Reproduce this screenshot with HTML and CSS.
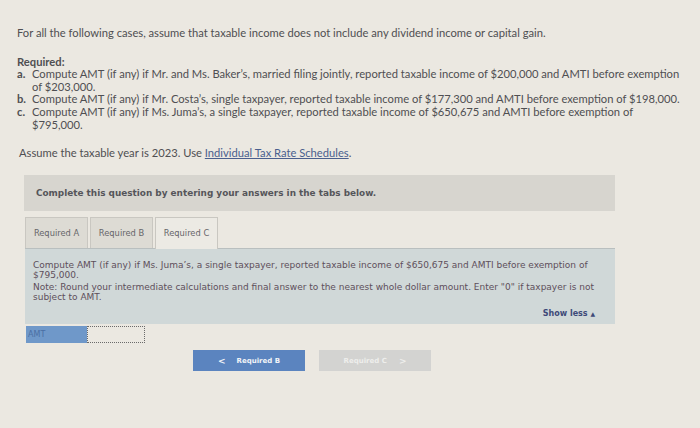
FILE: index.html
```html
<!DOCTYPE html>
<html>
<head>
<meta charset="utf-8">
<link rel="stylesheet" href="styles.css">
</head>
<body>
<div class="page">
  <p class="intro">For all the following cases, assume that taxable income does not include any dividend income or capital gain.</p>
  <p class="req-title">Required:</p>
  <ol class="req-list">
    <li><span class="mark">a.</span><span class="item">Compute AMT (if any) if Mr. and Ms. Baker’s, married filing jointly, reported taxable income of $200,000 and AMTI before exemption of $203,000.</span></li>
    <li><span class="mark">b.</span><span class="item">Compute AMT (if any) if Mr. Costa’s, single taxpayer, reported taxable income of $177,300 and AMTI before exemption of $198,000.</span></li>
    <li><span class="mark">c.</span><span class="item">Compute AMT (if any) if Ms. Juma’s, a single taxpayer, reported taxable income of $650,675 and AMTI before exemption of $795,000.</span></li>
  </ol>
  <p class="assume">Assume the taxable year is 2023. Use <a class="link" href="#">Individual Tax Rate Schedules</a>.</p>

  <div class="question">
    <div class="complete-box">Complete this question by entering your answers in the tabs below.</div>
    <div class="tabs">
      <div class="tab">Required A</div>
      <div class="tab">Required B</div>
      <div class="tab active">Required C</div>
    </div>
    <div class="panel">
      <p class="panel-text">Compute AMT (if any) if Ms. Juma’s, a single taxpayer, reported taxable income of $650,675 and AMTI before exemption of $795,000.</p>
      <p class="panel-note">Note: Round your intermediate calculations and final answer to the nearest whole dollar amount. Enter "0" if taxpayer is not subject to AMT.</p>
      <div class="show-less">Show less <span class="tri">▲</span></div>
    </div>
    <div class="amt-row">
      <div class="amt-label">AMT</div>
      <div class="amt-input"></div>
    </div>
    <div class="nav">
      <div class="btn btn-prev"><span class="chev">&lt;</span>Required B</div>
      <div class="btn btn-next">Required C<span class="chev">&gt;</span></div>
    </div>
  </div>
</div>
</body>
</html>
```
FILE: styles.css
```css
html, body {
  margin: 0;
  padding: 0;
}
body {
  background: #ebe8e1;
  width: 700px;
  height: 428px;
  overflow: hidden;
}
.page {
  padding: 26px 0 0 17px;
  font-family: "Lato", "Open Sans", sans-serif;
  font-size: 11.2px;
  color: #4f4f52;
}
p {
  margin: 0;
}
.intro {
  line-height: 13px;
}
.req-title {
  margin-top: 16px;
  font-weight: bold;
  line-height: 13px;
}
.req-list {
  list-style: none;
  margin: 0;
  padding: 0;
}
.req-list li {
  display: flex;
  line-height: 12.7px;
}
.req-list .mark {
  width: 15px;
  flex: none;
  font-weight: bold;
}
.req-list .item {
  width: 650px;
}
.assume {
  margin-top: 14px;
  margin-left: 2px;
  line-height: 13px;
}
.link {
  color: #4a5f8e;
  text-decoration: underline;
}
.question {
  margin-top: 16px;
  margin-left: 7px;
  width: 591px;
  font-family: "DejaVu Sans", Verdana, sans-serif;
}
.complete-box {
  background: #d7d5cf;
  height: 36px;
  display: flex;
  align-items: center;
  padding-left: 12px;
  font-size: 8.9px;
  font-weight: bold;
  color: #55555a;
}
.tabs {
  display: flex;
  gap: 2px;
  margin-top: 6px;
  margin-left: 1px;
}
.tab {
  width: 63px;
  height: 31px;
  box-sizing: border-box;
  border: 1px solid #c9c7c1;
  border-bottom: none;
  background: #dddbd4;
  display: flex;
  align-items: center;
  justify-content: center;
  font-size: 8.3px;
  color: #66666a;
}
.tab.active {
  background: #eceae4;
  height: 32px;
  margin-bottom: -1px;
}
.panel {
  background: #d0d8d8;
  border-top: 1px solid #b9bfbf;
  margin-left: 1px;
  padding: 11px 20px 5px 8px;
  font-size: 9px;
  line-height: 10.5px;
  color: #5e4f5b;
}
.panel-text {
  width: 570px;
  margin-bottom: 1px;
}
.panel-note {
  width: 575px;
}
.show-less {
  text-align: right;
  font-weight: bold;
  color: #3e4a78;
  font-size: 8px;
  margin-top: 6px;
}
.tri {
  font-size: 6px;
}
.amt-row {
  display: flex;
  margin-top: 2px;
  margin-left: 2px;
  height: 17px;
}
.amt-label {
  width: 61px;
  background: #6f98c9;
  color: #4a6fa4;
  font-size: 8px;
  padding-left: 2px;
  line-height: 17px;
  box-sizing: border-box;
}
.amt-input {
  width: 58px;
  box-sizing: border-box;
  border: 1px dotted #6a6a6a;
  background: #ebe8e1;
}
.nav {
  display: flex;
  justify-content: center;
  gap: 14px;
  margin-top: 7px;
  width: 576px;
}
.btn {
  width: 112px;
  height: 21px;
  display: flex;
  align-items: center;
  justify-content: center;
  font-size: 7px;
  font-weight: bold;
}
.btn-prev {
  background: #5b84bf;
  color: #f2f4f8;
}
.btn-prev .chev {
  margin-right: 11px;
  font-size: 9px;
}
.btn-next {
  background: #d3d3d1;
  color: #eeeeec;
}
.btn-next .chev {
  margin-left: 12px;
  font-size: 9px;
}
```
